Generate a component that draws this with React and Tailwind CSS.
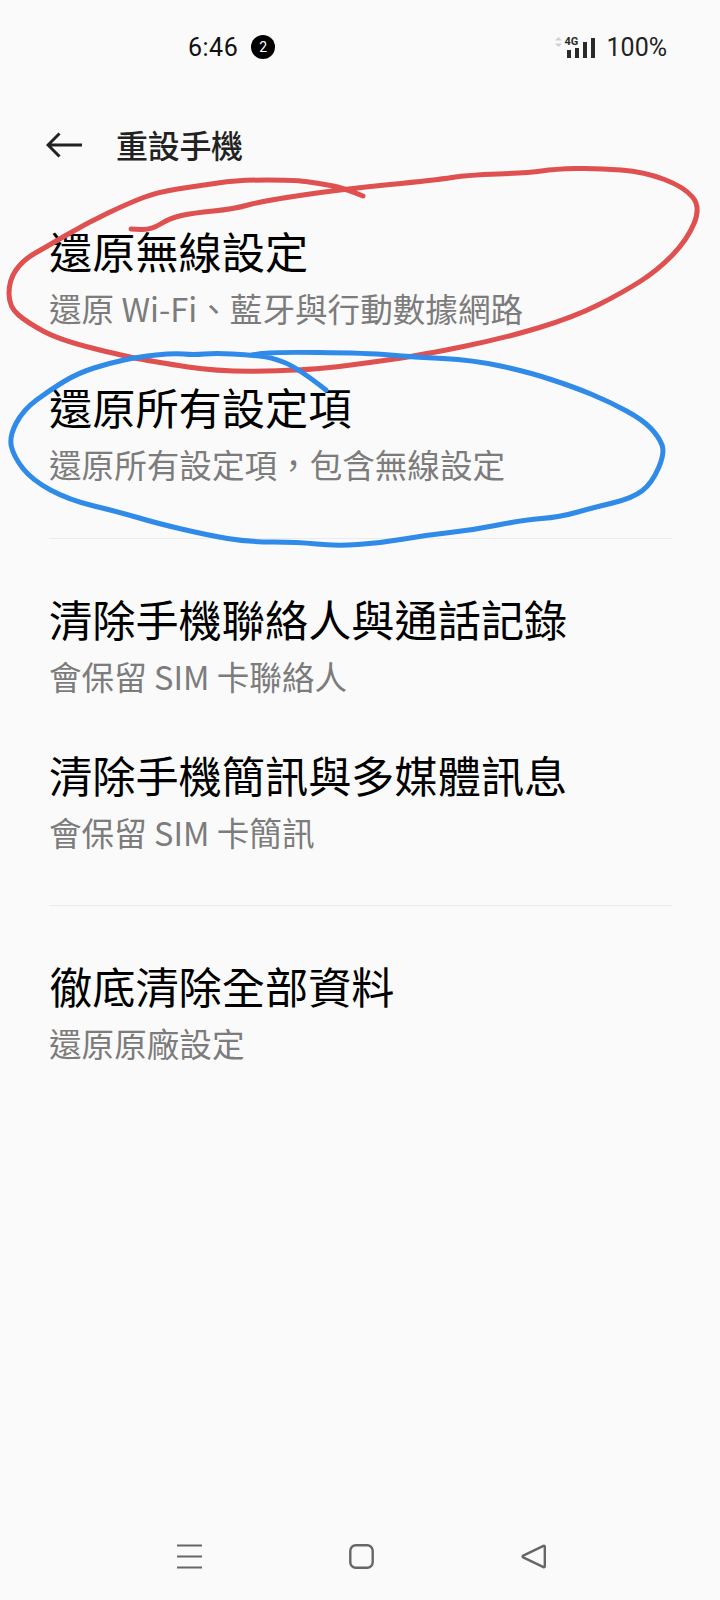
import React from 'react';

const redPoints = [
  [363, 196], [344, 188], [317, 183], [294, 180], [239, 180], [197, 186], [158, 192], [129, 203],
  [87, 223], [46, 247], [23, 260], [9, 280], [9, 307], [28, 323], [60, 340], [124, 356], [156, 362],
  [220, 372], [312, 370], [367, 363], [422, 355], [505, 338], [574, 317], [622, 293], [658, 270],
  [687, 240], [701, 207], [684, 187], [645, 172], [597, 168], [555, 169], [528, 173], [468, 175],
  [436, 180], [344, 189], [262, 201], [234, 209], [193, 213], [170, 218], [151, 230], [131, 229]
];

const bluePoints = [
  [326, 390], [298, 368], [271, 357], [248, 355], [216, 353], [193, 355], [174, 353], [138, 357],
  [110, 363], [78, 373], [50, 390], [23, 410], [9, 437], [14, 457], [32, 480], [69, 500], [119, 512],
  [156, 523], [207, 535], [248, 542], [298, 542], [335, 546], [381, 543], [427, 535], [473, 530],
  [523, 520], [560, 517], [592, 508], [633, 498], [652, 483], [665, 453], [659, 437], [643, 420],
  [610, 402], [574, 387], [528, 372], [473, 360], [413, 357], [367, 353], [271, 352], [252, 355]
];

// smooth a hand-drawn stroke through the midpoints
const toPath = (pts) => {
  let d = `M${pts[0][0]} ${pts[0][1]}`;
  for (let i = 1; i < pts.length - 1; i++) {
    const mx = (pts[i][0] + pts[i + 1][0]) / 2;
    const my = (pts[i][1] + pts[i + 1][1]) / 2;
    d += ` Q${pts[i][0]} ${pts[i][1]} ${mx} ${my}`;
  }
  const last = pts[pts.length - 1];
  return `${d} L${last[0]} ${last[1]}`;
};

const Row = ({ title, sub }) => (
  <div className="pt-[22px] pb-[20px]">
    <div className="text-[43.2px] leading-[56px] text-black whitespace-nowrap">{title}</div>
    <div className="mt-[2px] text-[32.6px] leading-[56px] text-[#7c7c7c] whitespace-nowrap">{sub}</div>
  </div>
);

const Divider = () => <div className="h-px bg-[#ebebeb] mr-[48px]" />;

const SignalIcon = () => (
  <div className="relative w-[42px] h-[22px]">
    <svg width="42" height="22" viewBox="0 0 42 22" className="absolute left-0 top-0">
      <path d="M3.5 0 L7 3.5 H0 Z M3.5 10 L7 6.5 H0 Z" fill="#cfcfcf" />
      <rect x="12" y="13" width="4" height="8" fill="#2a2a2a" />
      <rect x="20" y="11" width="4" height="10" fill="#2a2a2a" />
      <rect x="28" y="5" width="4" height="16" fill="#2a2a2a" />
      <rect x="36" y="1" width="4" height="20" fill="#2a2a2a" />
    </svg>
    <span className="absolute left-[10px] top-[-1px] text-[11px] leading-[12px] font-bold text-[#2a2a2a]">4G</span>
  </div>
);

export default function App() {
  return (
    <div className="relative h-[1600px] w-[720px] overflow-hidden bg-[#fafafa] flex flex-col font-['Noto_Sans_CJK_TC','Noto_Sans',sans-serif]">
      {/* status bar */}
      <div className="h-[94px] flex items-center pl-[188px] pr-[53px] font-['Roboto','Noto_Sans',sans-serif]">
        <span className="text-[25px] leading-[30px] mt-[2px] text-[#111] tracking-[0.5px]">6:46</span>
        <span className="ml-[13px] w-[24px] h-[24px] rounded-full bg-black text-white text-[14px] flex items-center justify-center">2</span>
        <div className="ml-auto mt-[2px] flex items-center gap-[10px]">
          <SignalIcon />
          <span className="text-[25px] leading-[30px] text-[#222]">100%</span>
        </div>
      </div>

      {/* header */}
      <div className="h-[106px] pb-[6px] flex items-center pl-[46px]">
        <svg width="36" height="26" viewBox="0 0 36 26" fill="none" stroke="#222" strokeWidth="3" className="mt-[2px]">
          <path d="M36 13 H2 M13.5 1.5 L2 13 L13.5 24.5" />
        </svg>
        <span className="ml-[34px] -mt-[1px] text-[32px] font-medium text-[#222] tracking-[-0.3px]">重設手機</span>
      </div>

      {/* list */}
      <div className="pl-[49px]">
        <Row title="還原無線設定" sub="還原 Wi-Fi、藍牙與行動數據網路" />
        <Row title="還原所有設定項" sub="還原所有設定項，包含無線設定" />
        <div className="mt-[26px] mb-[29px]"><Divider /></div>
        <Row title="清除手機聯絡人與通話記錄" sub="會保留 SIM 卡聯絡人" />
        <Row title="清除手機簡訊與多媒體訊息" sub="會保留 SIM 卡簡訊" />
        <div className="mt-[25px] mb-[29px]"><Divider /></div>
        <Row title="徹底清除全部資料" sub="還原原廠設定" />
      </div>

      {/* nav bar */}
      <div className="mt-auto pb-[31px] pl-[177px] pr-[174px] flex items-center justify-between">
        <svg width="25" height="25" viewBox="0 0 25 25" stroke="#666" strokeWidth="2.2">
          <path d="M0 1.5 H25 M0 12.5 H25 M0 23.5 H25" />
        </svg>
        <svg width="25" height="25" viewBox="0 0 25 25" fill="none" stroke="#666" strokeWidth="2.4">
          <rect x="1.3" y="1.3" width="22.4" height="22.4" rx="5.5" />
        </svg>
        <svg width="25" height="25" viewBox="0 0 25 25" fill="none" stroke="#666" strokeWidth="2.4" strokeLinejoin="round">
          <path d="M22.5 1.8 C23.3 1.5 23.8 2 23.8 2.8 V22.2 C23.8 23 23.3 23.5 22.5 23.2 L2.2 13.4 C1.4 13 1.4 12 2.2 11.6 Z" />
        </svg>
      </div>

      {/* hand-drawn annotation over the page */}
      <svg className="absolute left-0 top-0 pointer-events-none" width="720" height="1600" viewBox="0 0 720 1600" fill="none" strokeLinecap="round" strokeLinejoin="round">
        <path d={toPath(redPoints)} stroke="#df5050" strokeWidth="5" />
        <path d={toPath(bluePoints)} stroke="#2f8ae8" strokeWidth="5" />
      </svg>
    </div>
  );
}
